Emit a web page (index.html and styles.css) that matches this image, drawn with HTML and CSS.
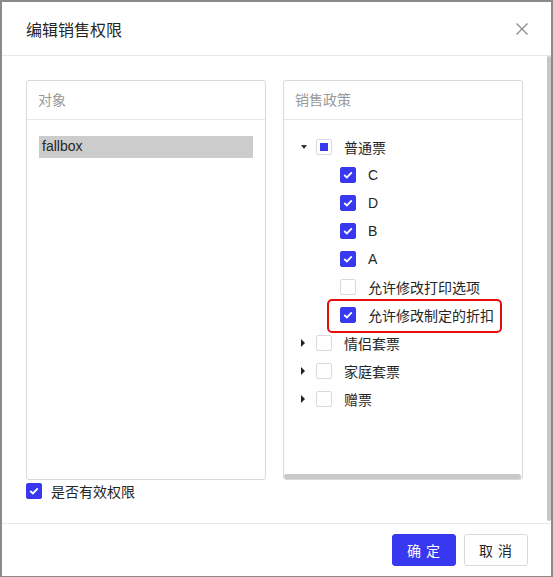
FILE: index.html
```html
<!DOCTYPE html>
<html>
<head>
<meta charset="utf-8">
<link rel="stylesheet" href="styles.css">
</head>
<body>
<div class="modal">
  <div class="modal-header">
    <div class="modal-title">编辑销售权限</div>
    <svg class="close" width="12" height="12" viewBox="0 0 12 12"><path d="M0.5 0.5 L11.5 11.5 M11.5 0.5 L0.5 11.5" stroke="#8c8c8c" stroke-width="1.3" fill="none"/></svg>
  </div>
  <div class="modal-body">
    <div class="panels">
      <div class="panel">
        <div class="panel-head">对象</div>
        <div class="panel-list">
          <div class="list-item selected">fallbox</div>
        </div>
      </div>
      <div class="panel">
        <div class="panel-head">销售政策</div>
        <div class="tree">
          <div class="node">
            <span class="switcher"><span class="caret-down"></span></span>
            <span class="cb half"><span class="dot"></span></span>
            <span class="label">普通票</span>
          </div>
          <div class="node child">
            <span class="switcher"></span>
            <span class="cb checked"><svg width="10" height="8" viewBox="0 0 10 8"><path d="M1.2 4 L3.9 6.4 L8.8 1.4" stroke="#fff" stroke-width="1.8" fill="none"/></svg></span>
            <span class="label latin">C</span>
          </div>
          <div class="node child">
            <span class="switcher"></span>
            <span class="cb checked"><svg width="10" height="8" viewBox="0 0 10 8"><path d="M1.2 4 L3.9 6.4 L8.8 1.4" stroke="#fff" stroke-width="1.8" fill="none"/></svg></span>
            <span class="label latin">D</span>
          </div>
          <div class="node child">
            <span class="switcher"></span>
            <span class="cb checked"><svg width="10" height="8" viewBox="0 0 10 8"><path d="M1.2 4 L3.9 6.4 L8.8 1.4" stroke="#fff" stroke-width="1.8" fill="none"/></svg></span>
            <span class="label latin">B</span>
          </div>
          <div class="node child">
            <span class="switcher"></span>
            <span class="cb checked"><svg width="10" height="8" viewBox="0 0 10 8"><path d="M1.2 4 L3.9 6.4 L8.8 1.4" stroke="#fff" stroke-width="1.8" fill="none"/></svg></span>
            <span class="label latin">A</span>
          </div>
          <div class="node child">
            <span class="switcher"></span>
            <span class="cb"></span>
            <span class="label">允许修改打印选项</span>
          </div>
          <div class="node child">
            <span class="switcher"></span>
            <span class="content highlight">
              <span class="cb checked"><svg width="10" height="8" viewBox="0 0 10 8"><path d="M1.2 4 L3.9 6.4 L8.8 1.4" stroke="#fff" stroke-width="1.8" fill="none"/></svg></span>
              <span class="label">允许修改制定的折扣</span>
            </span>
          </div>
          <div class="node">
            <span class="switcher"><span class="caret-right"></span></span>
            <span class="cb"></span>
            <span class="label">情侣套票</span>
          </div>
          <div class="node">
            <span class="switcher"><span class="caret-right"></span></span>
            <span class="cb"></span>
            <span class="label">家庭套票</span>
          </div>
          <div class="node">
            <span class="switcher"><span class="caret-right"></span></span>
            <span class="cb"></span>
            <span class="label">赠票</span>
          </div>
        </div>
        <div class="hscroll"></div>
      </div>
    </div>
    <label class="valid">
      <span class="cb checked"><svg width="10" height="8" viewBox="0 0 10 8"><path d="M1.2 4 L3.9 6.4 L8.8 1.4" stroke="#fff" stroke-width="1.8" fill="none"/></svg></span>
      <span class="label">是否有效权限</span>
    </label>
    <div class="vscroll"></div>
  </div>
  <div class="modal-footer">
    <button class="btn primary">确 定</button>
    <button class="btn">取 消</button>
  </div>
</div>
</body>
</html>
```
FILE: styles.css
```css
html, body {
  margin: 0;
  padding: 0;
}
body {
  background: #8a8a8a;
  width: 553px;
  height: 577px;
  overflow: hidden;
  font-family: "Liberation Sans", "Noto Sans CJK SC", sans-serif;
  font-size: 14px;
  color: #333;
}
.modal {
  margin: 2px 2px 0 2px;
  width: 549px;
  height: 574px;
  background: #fff;
  display: flex;
  flex-direction: column;
}
.modal-header {
  height: 53px;
  border-bottom: 1px solid #e8e8e8;
  display: flex;
  align-items: center;
  justify-content: space-between;
  padding: 0 23px 0 24px;
}
.modal-title {
  font-family: "Noto Sans CJK SC", sans-serif;
  font-size: 16px;
  color: #262626;
  margin-top: 0;
}
.close {
  display: block;
  margin-top: 1px;
}
.modal-body {
  position: relative;
  padding: 24px 0 24px 24px;
  height: 419px;
  border-bottom: 1px solid #e8e8e8;
}
.panels {
  display: flex;
  gap: 17px;
}
.panel {
  position: relative;
  width: 238px;
  height: 398px;
  border: 1px solid #d9d9d9;
  border-radius: 3px;
  overflow: hidden;
}
.panel-head {
  box-sizing: border-box;
  height: 39px;
  border-bottom: 1px solid #e8e8e8;
  display: flex;
  align-items: center;
  padding: 0 0 3px 11px;
  color: #999;
  font-family: "Noto Sans CJK SC", sans-serif;
  font-size: 14px;
}
.panel-list {
  padding: 16px 12px;
}
.list-item {
  height: 22px;
  line-height: 21px;
  padding-left: 3px;
  font-size: 14px;
  color: #262626;
}
.list-item.selected {
  background: #cccccc;
}
.tree {
  padding: 13px 0 0 8px;
}
.node {
  height: 28px;
  display: flex;
  align-items: center;
}
.node.child {
  padding-left: 24px;
}
.switcher {
  width: 24px;
  height: 28px;
  display: flex;
  align-items: center;
  justify-content: center;
}
.caret-down {
  width: 0;
  height: 0;
  border-left: 3.5px solid transparent;
  border-right: 3.5px solid transparent;
  border-top: 4px solid #333;
  margin-left: -1px;
}
.caret-right {
  width: 0;
  height: 0;
  border-top: 4px solid transparent;
  border-bottom: 4px solid transparent;
  border-left: 4px solid #222;
  margin-left: -2px;
}
.cb {
  box-sizing: border-box;
  width: 16px;
  height: 16px;
  border: 1px solid #d9d9d9;
  border-radius: 2px;
  background: #fff;
  display: flex;
  align-items: center;
  justify-content: center;
  flex: none;
}
.cb.checked {
  background: #3838f0;
  border-color: #3838f0;
}
.cb svg {
  display: block;
}
.dot {
  width: 8px;
  height: 8px;
  background: #3838f0;
}
.label {
  margin-left: 12px;
  font-family: "Noto Sans CJK SC", sans-serif;
  font-size: 14px;
  color: #262626;
  white-space: nowrap;
}
.label.latin {
  font-family: "Liberation Sans", sans-serif;
}
.content {
  display: flex;
  align-items: center;
}
.highlight {
  position: relative;
}
.highlight::after {
  content: "";
  position: absolute;
  left: -13px;
  right: -8px;
  top: -6px;
  bottom: -8px;
  border: 2px solid #e60d0d;
  border-radius: 5px;
}
.hscroll {
  position: absolute;
  left: 0;
  right: 1px;
  bottom: 0;
  height: 5px;
  background: #c8c8c8;
  border-radius: 3px;
}
.valid {
  display: flex;
  align-items: center;
  margin-top: 2px;
  height: 17px;
}
.valid .label {
  margin-left: 9px;
}
.vscroll {
  position: absolute;
  right: 0;
  top: 0;
  width: 4px;
  height: 465px;
  background: #c6c6c6;
  border-radius: 2px;
}
.modal-footer {
  flex: 1;
  display: flex;
  justify-content: flex-end;
  align-items: flex-start;
  gap: 8px;
  padding: 10px 23px 0 0;
}
.btn {
  width: 64px;
  height: 32px;
  border: 1px solid #d9d9d9;
  border-radius: 3px;
  background: #fff;
  font-family: "Noto Sans CJK SC", sans-serif;
  font-size: 14px;
  color: #262626;
  padding: 0;
  letter-spacing: 1px;
}
.btn.primary {
  background: #3838f0;
  border-color: #3838f0;
  color: #fff;
}
```
